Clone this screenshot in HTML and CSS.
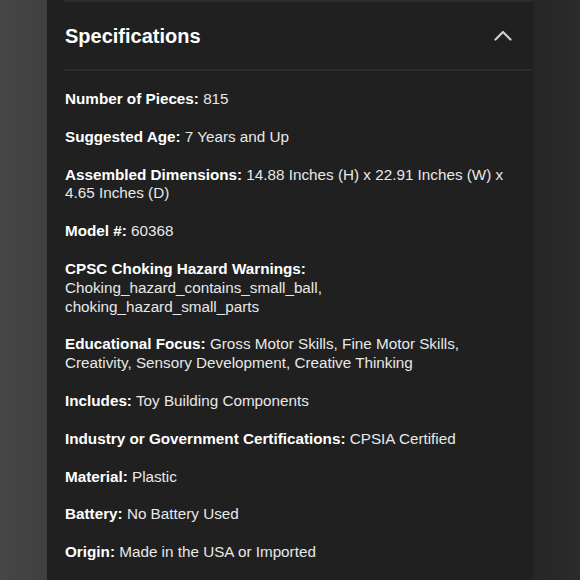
FILE: index.html
```html
<!DOCTYPE html>
<html lang="en">
<head>
<meta charset="utf-8">
<title>Specifications</title>
<link rel="stylesheet" href="styles.css">
</head>
<body>
<div class="page">
  <div class="side side-left"></div>
  <section class="panel">
    <header class="panel-head">
      <h2 class="title">Specifications</h2>
      <svg class="chevron" width="18" height="11" viewBox="0 0 18 11" aria-hidden="true">
        <path d="M1.5 9.5 L9 2 L16.5 9.5" fill="none" stroke="#cfcfcf" stroke-width="2.2" stroke-linecap="round" stroke-linejoin="round"/>
      </svg>
    </header>
    <div class="specs">
      <p class="spec"><b>Number of Pieces:</b> 815</p>
      <p class="spec"><b>Suggested Age:</b> 7 Years and Up</p>
      <p class="spec"><b>Assembled Dimensions:</b> 14.88 Inches (H) x 22.91 Inches (W) x 4.65 Inches (D)</p>
      <p class="spec"><b>Model #:</b> 60368</p>
      <p class="spec"><b>CPSC Choking Hazard Warnings:</b><br>Choking_hazard_contains_small_ball,<br>choking_hazard_small_parts</p>
      <p class="spec"><b>Educational Focus:</b> Gross Motor Skills, Fine Motor Skills, Creativity, Sensory Development, Creative Thinking</p>
      <p class="spec"><b>Includes:</b> Toy Building Components</p>
      <p class="spec"><b>Industry or Government Certifications:</b> CPSIA Certified</p>
      <p class="spec"><b>Material:</b> Plastic</p>
      <p class="spec"><b>Battery:</b> No Battery Used</p>
      <p class="spec"><b>Origin:</b> Made in the USA or Imported</p>
    </div>
  </section>
  <div class="side side-right"></div>
</div>
</body>
</html>
```

FILE: styles.css
```css
html, body {
  margin: 0;
  padding: 0;
  background: #202020;
}

.page {
  display: flex;
  width: 580px;
  height: 580px;
  overflow: hidden;
  font-family: "Liberation Sans", Arial, sans-serif;
}

.side {
  flex: 0 0 47px;
}

.side-left {
  background: linear-gradient(to right, #474747, #3f3f3f);
}

.side-right {
  background: linear-gradient(to right, #262626, #2b2b2b);
}

.panel {
  flex: 1;
  background: #202020;
  padding: 0 17px 0 17px;
}

.panel-head {
  display: flex;
  align-items: center;
  justify-content: space-between;
  height: 67px;
  border-top: 2px solid #2b2b2b;
  border-bottom: 2px solid #2c2c2c;
  margin-right: -17px;
  padding-right: 21px;
}

.title {
  margin: 0;
  font-size: 20px;
  font-weight: bold;
  color: #ffffff;
  padding-left: 1px;
  position: relative;
  top: 1px;
}

.chevron {
  display: block;
}

.specs {
  padding-top: 19px;
  padding-left: 1px;
}

.spec {
  margin: 0 0 18.875px 0;
  font-size: 15.25px;
  line-height: 18.875px;
  color: #e8e8e8;
}

.spec b {
  color: #ffffff;
  font-weight: bold;
}
```
